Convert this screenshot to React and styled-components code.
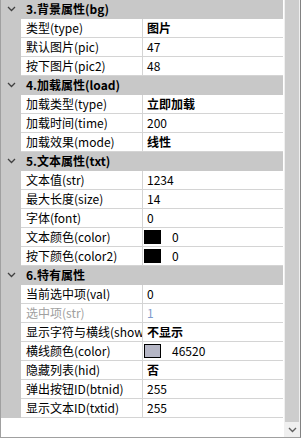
import React from "react";
import styled, { createGlobalStyle } from "styled-components";

const Global = createGlobalStyle`
  html, body { margin: 0; padding: 0; background: #fff; }
  body { font-family: "Noto Sans CJK SC", "Noto Sans", sans-serif; }
`;

const Panel = styled.div`
  width: 301px;
  height: 438px;
  box-sizing: border-box;
  border-left: 1px solid #a0a0a0;
  border-right: 1px solid #828282;
  border-bottom: 1px solid #a0a0a0;
  display: flex;
  background: #fff;
  overflow: hidden;
`;

const Grid = styled.div`
  flex: 1;
  display: flex;
  flex-direction: column;
  min-width: 0;
`;

const Row = styled.div`
  display: grid;
  grid-template-columns: 20px 122px 1fr;
  height: 19px;
  font-size: 12px;
  line-height: 18px;
`;

const Gutter = styled.div`
  background: #c8c8c8;
  display: flex;
  align-items: center;
  justify-content: center;
  padding-bottom: 1px;
`;

const HeaderCell = styled.div`
  grid-column: 2 / 4;
  background: #c8c8c8;
  font-weight: bold;
  padding-left: 5px;
  color: #000;
  white-space: nowrap;
`;

const Label = styled.div`
  padding-left: 5px;
  border-right: 1px solid #d4d4d4;
  border-bottom: 1px solid #d4d4d4;
  white-space: nowrap;
  overflow: hidden;
  color: ${(p) => (p.$disabled ? "#a0a0a0" : "#000")};
`;

const Value = styled.div`
  padding-left: 4px;
  border-bottom: 1px solid #d4d4d4;
  white-space: nowrap;
  overflow: hidden;
  display: flex;
  align-items: center;
  color: ${(p) => (p.$disabled ? "#7f9ccc" : "#000")};
  font-weight: ${(p) => (p.$bold ? "bold" : "normal")};
`;

const Swatch = styled.span`
  display: inline-block;
  width: 17px;
  height: 14px;
  box-sizing: border-box;
  border: 1px solid #000;
  background: ${(p) => p.$color};
  margin-left: -3px;
  margin-right: 11px;
  margin-bottom: 1px;
`;

const Filler = styled.div`
  flex: 1;
  background: #fff;
`;

const Scrollbar = styled.div`
  width: 16px;
  margin-left: 1px;
  display: flex;
  flex-direction: column;
  background: #f0f0f0;
`;

const Thumb = styled.div`
  height: 422px;
  margin: 0 1px;
  background: #cdcdcd;
`;

const Arrow = styled.div`
  flex: 1;
  display: flex;
  align-items: center;
  justify-content: center;
`;

const Chevron = () => (
  <svg width="9" height="6" viewBox="0 0 9 6">
    <path d="M1 1 L4.5 4.5 L8 1" fill="none" stroke="#606060" strokeWidth="1.4" />
  </svg>
);

const HeadChevron = () => (
  <svg width="9" height="6" viewBox="0 0 9 6">
    <path d="M1 1 L4.5 4.5 L8 1" fill="none" stroke="#404040" strokeWidth="1.3" />
  </svg>
);

const data = [
  { h: "3.背景属性(bg)" },
  { l: "类型(type)", v: "图片", b: true },
  { l: "默认图片(pic)", v: "47" },
  { l: "按下图片(pic2)", v: "48" },
  { h: "4.加载属性(load)" },
  { l: "加载类型(type)", v: "立即加载", b: true },
  { l: "加载时间(time)", v: "200" },
  { l: "加载效果(mode)", v: "线性", b: true },
  { h: "5.文本属性(txt)" },
  { l: "文本值(str)", v: "1234" },
  { l: "最大长度(size)", v: "14" },
  { l: "字体(font)", v: "0" },
  { l: "文本颜色(color)", v: "0", c: "#000" },
  { l: "按下颜色(color2)", v: "0", c: "#000" },
  { h: "6.特有属性" },
  { l: "当前选中项(val)", v: "0" },
  { l: "选中项(str)", v: "1", d: true },
  { l: "显示字符与横线(show)", v: "不显示", b: true },
  { l: "横线颜色(color)", v: "46520", c: "#b5b6c5" },
  { l: "隐藏列表(hid)", v: "否", b: true },
  { l: "弹出按钮ID(btnid)", v: "255" },
  { l: "显示文本ID(txtid)", v: "255" },
];

export default function App() {
  return (
    <>
      <Global />
      <Panel>
        <Grid>
          {data.map((r, i) =>
            r.h ? (
              <Row key={i}>
                <Gutter>
                  <HeadChevron />
                </Gutter>
                <HeaderCell>{r.h}</HeaderCell>
              </Row>
            ) : (
              <Row key={i}>
                <Gutter />
                <Label $disabled={r.d}>{r.l}</Label>
                <Value $disabled={r.d} $bold={r.b}>
                  {r.c && <Swatch $color={r.c} />}
                  {r.v}
                </Value>
              </Row>
            )
          )}
          <Filler />
        </Grid>
        <Scrollbar>
          <Thumb />
          <Arrow>
            <Chevron />
          </Arrow>
        </Scrollbar>
      </Panel>
    </>
  );
}
